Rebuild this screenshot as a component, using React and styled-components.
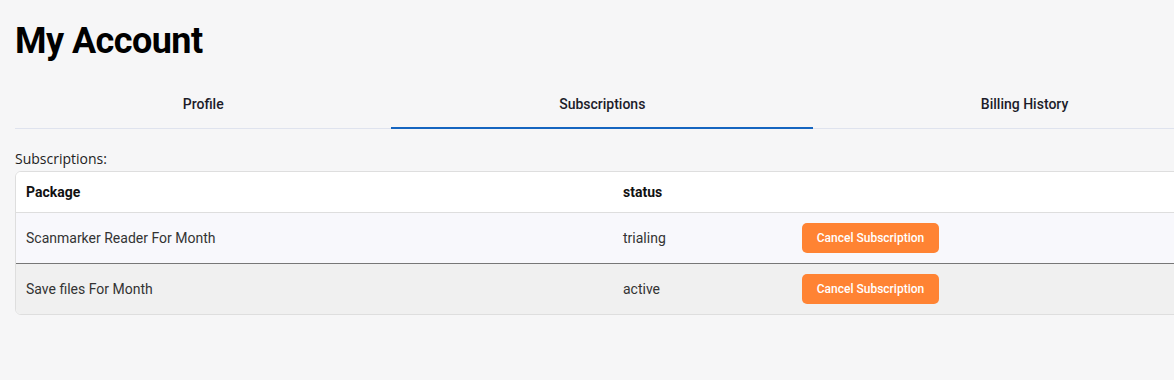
import React, { useState } from "react";
import styled, { createGlobalStyle } from "styled-components";

const Global = createGlobalStyle`
  html, body { margin: 0; padding: 0; overflow: hidden; }
  body {
    background: #f6f6f7;
    font-family: Roboto, "Liberation Sans", sans-serif;
    color: #222;
  }
`;

const Page = styled.div`
  width: 1221px;
  padding: 0 0 0 15px;
  border-left: 2px solid #fafafa;
  margin-left: -2px;
  min-height: 380px;
`;

const Title = styled.h1`
  margin: 0;
  padding-top: 20px;
  font-family: Roboto, sans-serif;
  font-weight: 700;
  font-size: 36px;
  line-height: 42px;
  color: #000;
  letter-spacing: -0.55px;
`;

const TabBar = styled.div`
  display: flex;
  margin-top: 20px;
  border-bottom: 1px solid #dfe3ee;
`;

const Tab = styled.button`
  flex: 1 1 auto;
  background: none;
  border: none;
  padding: 0 0 2px;
  height: 47px;
  font-family: Roboto, sans-serif;
  font-weight: 500;
  font-size: 14px;
  color: #1c1c2a;
  cursor: pointer;
  border-bottom: 2px solid ${(p) => (p.$active ? "#1565c0" : "transparent")};
  margin-bottom: -1px;
  box-sizing: border-box;
`;

const Label = styled.div`
  margin-top: 19px;
  font-family: "Open Sans", sans-serif;
  font-size: 14px;
  line-height: 21px;
  color: #222;
`;

const Table = styled.div`
  margin-top: 2px;
  border: 1px solid #dedede;
  border-radius: 6px;
  overflow: hidden;
  background: #fff;
`;

const Row = styled.div`
  display: grid;
  grid-template-columns: 597px 179px 1fr;
  align-items: center;
  height: ${(p) => (p.$head ? "40px" : "50px")};
  background: ${(p) => p.$bg};
  border-top: ${(p) => p.$border || "none"};
`;

const Cell = styled.div`
  padding: 0 10px;
  font-size: 14px;
  font-weight: ${(p) => (p.$head ? 700 : 400)};
  color: ${(p) => (p.$head ? "#111" : "#333")};
`;

const CancelButton = styled.button`
  background: #ff8333;
  color: #fff;
  border: none;
  border-radius: 5px;
  height: 30px;
  width: 137px;
  font-family: Roboto, sans-serif;
  font-weight: 500;
  font-size: 12px;
  cursor: pointer;
`;

const rows = [
  { pkg: "Scanmarker Reader For Month", status: "trialing", bg: "#f8f8fc", border: "1px solid #dedede" },
  { pkg: "Save files For Month", status: "active", bg: "#f0f0f0", border: "1px solid #777" },
];

export default function App() {
  const [tab, setTab] = useState(1);
  const tabs = ["Profile", "Subscriptions", "Billing History"];
  return (
    <>
      <Global />
      <Page>
        <Title>My Account</Title>
        <TabBar>
          {tabs.map((t, i) => (
            <Tab key={t} $active={i === tab} onClick={() => setTab(i)}>
              {t}
            </Tab>
          ))}
        </TabBar>
        <Label>Subscriptions:</Label>
        <Table>
          <Row $head $bg="#fff">
            <Cell $head>Package</Cell>
            <Cell $head>status</Cell>
            <Cell />
          </Row>
          {rows.map((r) => (
            <Row key={r.pkg} $bg={r.bg} $border={r.border}>
              <Cell>{r.pkg}</Cell>
              <Cell>{r.status}</Cell>
              <Cell>
                <CancelButton>Cancel Subscription</CancelButton>
              </Cell>
            </Row>
          ))}
        </Table>
      </Page>
    </>
  );
}
